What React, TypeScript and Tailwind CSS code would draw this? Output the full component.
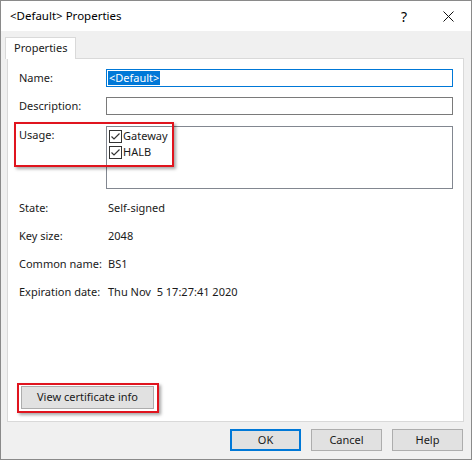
import { useState } from 'react'

const font = { fontFamily: '"Segoe UI", "Noto Sans", "Liberation Sans", sans-serif' }

function Check({ label }: { label: string }) {
  return (
    <div className="flex items-center h-[16px]">
      <span className="w-[13px] h-[13px] border border-[#333] bg-white flex items-center justify-center mr-px">
        <svg width="11" height="11" viewBox="0 0 11 11">
          <path d="M1.5 5.5 L4 8 L9.5 2.5" fill="none" stroke="#333" strokeWidth="1.2" />
        </svg>
      </span>
      <span>{label}</span>
    </div>
  )
}

function Btn({ label, primary }: { label: string; primary?: boolean }) {
  return (
    <button
      className={`w-[71px] h-[22px] bg-[#e1e1e1] text-[#1a1a1a] ${
        primary ? 'border-2 border-[#0078d7]' : 'border border-[#adadad]'
      }`}
    >
      {label}
    </button>
  )
}

export default function App() {
  const [name] = useState('<Default>')

  const info = [
    { label: 'State:', value: 'Self-signed' },
    { label: 'Key size:', value: '2048' },
    { label: 'Common name:', value: 'BS1' },
    { label: 'Expiration date:', value: 'Thu Nov\u00a0\u00a05 17:27:41 2020' },
  ]

  return (
    <div className="w-[472px] h-[460px] bg-[#f0f0f0] flex flex-col border border-[#8a8a8a] text-[11px] text-[#1a1a1a] relative whitespace-nowrap" style={font}>
      {/* title bar */}
      <div className="h-[30px] bg-white flex items-center pl-[9px] pr-[17px] shrink-0">
        <span className="flex-1 text-[11.5px] text-black">&lt;Default&gt; Properties</span>
        <span className="text-[14px] text-black mr-[36px]">?</span>
        <svg width="11" height="11" viewBox="0 0 11 11">
          <path d="M0.5 0.5 L10.5 10.5 M10.5 0.5 L0.5 10.5" stroke="#111" strokeWidth="1" />
        </svg>
      </div>

      {/* tab area */}
      <div className="flex-1 flex flex-col pt-[6px] pl-[4px] pr-[7px]">
        <div className="flex">
          <div className="h-[22px] px-[8px] bg-white border border-b-0 border-[#d9d9d9] flex items-center relative z-10 -mb-px">
            Properties
          </div>
        </div>
        <div className="h-[364px] bg-white border border-[#d9d9d9] ml-[2px] pt-[10px] pl-[11px] pr-[10px] flex flex-col">
          <div className="flex items-center h-[18px]">
            <span className="w-[87px]">Name:</span>
            <div className="flex-1 h-[18px] border border-[#0078d7] flex items-center px-px">
              <span className="bg-[#0078d7] text-white leading-[14px] px-px">{name}</span>
            </div>
          </div>
          <div className="flex items-center h-[18px] mt-[10px]">
            <span className="w-[87px]">Description:</span>
            <div className="flex-1 h-[18px] border border-[#7a7a7a]" />
          </div>
          <div className="flex mt-[11px]">
            <span className="w-[87px] pt-px">Usage:</span>
            <div className="flex-1 h-[63px] border border-[#828790] pl-[2px] pt-px">
              <Check label="Gateway" />
              <Check label="HALB" />
            </div>
          </div>
          <div className="mt-[5px]">
            {info.map((r) => (
              <div key={r.label} className="flex items-center h-[28px]">
                <span className="w-[89px]">{r.label}</span>
                <span>{r.value}</span>
              </div>
            ))}
          </div>
          <div className="flex-1" />
          <button className="w-[133px] h-[23px] ml-[2px] mb-[12px] bg-[#e1e1e1] border border-[#adadad]">
            View certificate info
          </button>
        </div>

        {/* bottom buttons */}
        <div className="flex justify-end gap-[10px] pt-[7px] pr-px">
          <Btn label="OK" primary />
          <Btn label="Cancel" />
          <Btn label="Help" />
        </div>
      </div>

      {/* red highlight marks */}
      <div className="absolute left-[13px] top-[121px] w-[160px] h-[45px] border-2 border-[#e0141e] shadow-[2px_2px_3px_rgba(0,0,0,0.35)]" />
      <div className="absolute left-[16px] top-[382px] w-[142px] h-[30px] border-2 border-[#e0141e] shadow-[2px_2px_3px_rgba(0,0,0,0.35)]" />
    </div>
  )
}
